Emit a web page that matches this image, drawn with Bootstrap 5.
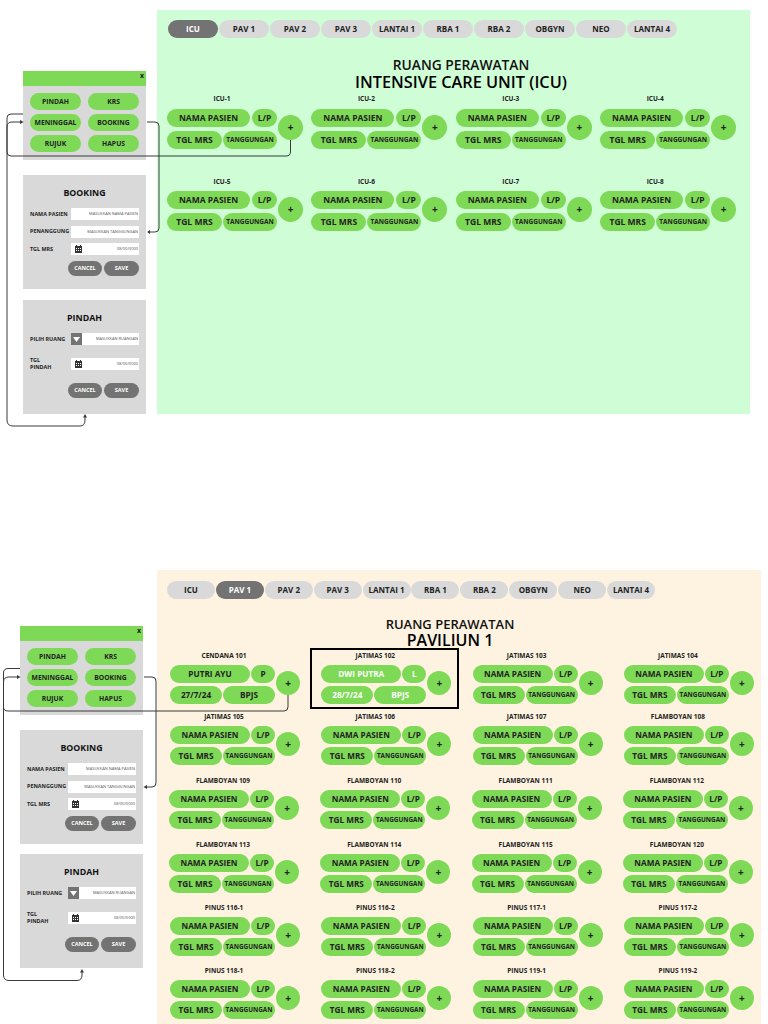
<!DOCTYPE html>
<html lang="id">
<head>
<meta charset="utf-8">
<title>Ruang Perawatan</title>
<link href="https://cdn.jsdelivr.net/npm/bootstrap@5.3.0/dist/css/bootstrap.min.css" rel="stylesheet">
<style>
html,body{margin:0;background:#fff}
body{position:relative;width:768px;height:1024px;overflow:hidden;font-family:"Open Sans","Liberation Sans",sans-serif;color:#1a1a1a}
.screen{position:absolute;left:157px}
.screen-a{top:10px;width:593px;height:404px;background:#cffdd6;padding:10px 0 0 10px}
.screen-b{top:570px;width:604px;height:454px;background:#fef3e0;padding:11px 0 0 13px}
.tabbar{display:flex;height:18px}
.screen-a .tabbar{gap:1px;margin-left:1px}
.screen-b .tabbar{gap:.9px;margin-left:-3px}
.tabpill{flex:0 0 auto;background:#d9d9d9;color:#222;font-weight:700;font-size:8px;line-height:17px;text-align:center;border-radius:9px}
.screen-a .tabpill{width:50px}
.screen-b .tabpill{width:48px}
.tabpill.on{background:#737373;color:#fff}
.head-a{margin:19px 0 0 10px;width:568px;text-align:center}
.head-b{margin:17px 0 0 -13px;width:586px;text-align:center}
.head-sub{font-size:13px;line-height:16px;font-weight:600;color:#111}
.head-a .head-sub{font-size:13.8px}
.head-main{font-size:16px;line-height:17px;font-weight:600;color:#000}
.head-a .head-main{font-size:16.300px;line-height:18px}
.grid-a{display:grid;grid-template-columns:repeat(4,144.4px);grid-auto-rows:82.500px;margin-top:2px}
.grid-b{display:grid;grid-template-columns:repeat(4,151.3px);grid-template-rows:61px 64px 64px 63px 63px 63px;margin-top:1px}
.bed{display:flex;align-items:flex-start;gap:1px}
.shift-l{margin-left:-1px}
.bed-body{width:110px;flex:0 0 auto}
.bed-name{font-size:6.500px;line-height:12px;font-weight:700;text-align:center;color:#222;margin-bottom:3.500px}
.bed-row{display:flex;gap:2px;margin-bottom:4px}
.gp{background:#7ed957;color:#222;font-weight:700;text-align:center;height:18px;line-height:17px;border-radius:9px;font-size:8.500px}
.w-name{width:83px}.w-sex{width:25px}.w-date{width:55px;margin-right:-1px}.w-pay{width:54px;font-size:6.500px}
.bed-plus{flex:0 0 25px;width:25px;height:25px;border-radius:50%;background:#7ed957;color:#222;font-weight:700;font-size:10px;line-height:25px;text-align:center;margin-top:21.500px}
.screen-b .bed-body{width:105px}
.screen-b .bed-name{margin:0 -3px 3px 0}
.screen-b .bed-row{gap:1px;margin-bottom:3px}
.screen-b .gp{font-size:8.200px}
.screen-b .w-name{width:80px}
.screen-b .w-sex{width:24px}
.screen-b .w-date{width:52px;margin-right:0}
.screen-b .w-pay{width:52px;font-size:6.400px}
.screen-b .w-pay.big{font-size:8.200px}
.screen-b .bed-plus{width:24px;height:24px;flex-basis:24px;line-height:24px;margin-top:20.500px}
.bed.filled-light .gp{color:#fff}
.bed-flag{position:relative}
.bed-flag::after{content:"";position:absolute;left:-11px;top:-2px;width:149px;height:61px;border:2px solid #000;pointer-events:none}
.win{position:absolute;width:123px;background:#d9d9d9}
.win-menu{height:89px}
.win-bar{height:15px;background:#7ed957;font-size:7px;font-weight:700;line-height:10px;text-align:right;padding-right:2px}
.win-btns{display:grid;grid-template-columns:51px 51px;column-gap:7px;row-gap:4px;padding:7px 0 0 7px}
.win .gb{height:17px;line-height:17px;font-size:6.800px;border-radius:8.500px}
.win-form{height:114px;padding:12px 7px 0}
.win-title{font-size:8.800px;line-height:12px;font-weight:700;text-align:center;color:#111;margin-bottom:9px}
.form-line{display:flex;align-items:center;height:12px;margin-bottom:5.500px}
.form-pair .form-line{margin-bottom:13px}
.form-lab{width:41px;flex:0 0 41px;font-size:5.400px;line-height:7px;font-weight:700;color:#222}
.form-field{flex:1;height:12px;background:#fff;display:flex;align-items:center;justify-content:space-between;font-size:4px;color:#555;padding-right:1px}
.form-field span:last-child{margin-left:auto}
.drop{width:11px;height:12px;background:#737373;display:flex;align-items:center;justify-content:center}
.cal{display:block;margin-left:4px}
.form-acts{display:flex;justify-content:flex-end;gap:2px}
.gray-pill{background:#737373;color:#fff;font-weight:700;font-size:5.500px;text-align:center;height:15px;line-height:14px;border-radius:7.500px}
.w-cancel{width:34px}.w-save{width:35px}
.wires{position:absolute;left:0;top:0;z-index:5;pointer-events:none}
</style>
</head>
<body>

<main class="screen screen-a">
  <nav class="tabbar">
    <div class="tabpill on">ICU</div><div class="tabpill">PAV 1</div><div class="tabpill">PAV 2</div><div class="tabpill">PAV 3</div><div class="tabpill">LANTAI 1</div><div class="tabpill">RBA 1</div><div class="tabpill">RBA 2</div><div class="tabpill">OBGYN</div><div class="tabpill">NEO</div><div class="tabpill">LANTAI 4</div>
  </nav>
  <div class="head-a"><div class="head-sub">RUANG PERAWATAN</div><div class="head-main">INTENSIVE CARE UNIT (ICU)</div></div>
  <div class="grid-a">
    <div class="bed"><div class="bed-body"><div class="bed-name">ICU-1</div><div class="bed-row"><div class="gp w-name">NAMA PASIEN</div><div class="gp w-sex">L/P</div></div><div class="bed-row"><div class="gp w-date">TGL MRS</div><div class="gp w-pay">TANGGUNGAN</div></div></div><div class="bed-plus">+</div></div>
    <div class="bed"><div class="bed-body"><div class="bed-name">ICU-2</div><div class="bed-row"><div class="gp w-name">NAMA PASIEN</div><div class="gp w-sex">L/P</div></div><div class="bed-row"><div class="gp w-date">TGL MRS</div><div class="gp w-pay">TANGGUNGAN</div></div></div><div class="bed-plus">+</div></div>
    <div class="bed"><div class="bed-body"><div class="bed-name">ICU-3</div><div class="bed-row"><div class="gp w-name">NAMA PASIEN</div><div class="gp w-sex">L/P</div></div><div class="bed-row"><div class="gp w-date">TGL MRS</div><div class="gp w-pay">TANGGUNGAN</div></div></div><div class="bed-plus">+</div></div>
    <div class="bed"><div class="bed-body"><div class="bed-name">ICU-4</div><div class="bed-row"><div class="gp w-name">NAMA PASIEN</div><div class="gp w-sex">L/P</div></div><div class="bed-row"><div class="gp w-date">TGL MRS</div><div class="gp w-pay">TANGGUNGAN</div></div></div><div class="bed-plus">+</div></div>
    <div class="bed"><div class="bed-body"><div class="bed-name">ICU-5</div><div class="bed-row"><div class="gp w-name">NAMA PASIEN</div><div class="gp w-sex">L/P</div></div><div class="bed-row"><div class="gp w-date">TGL MRS</div><div class="gp w-pay">TANGGUNGAN</div></div></div><div class="bed-plus">+</div></div>
    <div class="bed"><div class="bed-body"><div class="bed-name">ICU-6</div><div class="bed-row"><div class="gp w-name">NAMA PASIEN</div><div class="gp w-sex">L/P</div></div><div class="bed-row"><div class="gp w-date">TGL MRS</div><div class="gp w-pay">TANGGUNGAN</div></div></div><div class="bed-plus">+</div></div>
    <div class="bed"><div class="bed-body"><div class="bed-name">ICU-7</div><div class="bed-row"><div class="gp w-name">NAMA PASIEN</div><div class="gp w-sex">L/P</div></div><div class="bed-row"><div class="gp w-date">TGL MRS</div><div class="gp w-pay">TANGGUNGAN</div></div></div><div class="bed-plus">+</div></div>
    <div class="bed"><div class="bed-body"><div class="bed-name">ICU-8</div><div class="bed-row"><div class="gp w-name">NAMA PASIEN</div><div class="gp w-sex">L/P</div></div><div class="bed-row"><div class="gp w-date">TGL MRS</div><div class="gp w-pay">TANGGUNGAN</div></div></div><div class="bed-plus">+</div></div>
  </div>
</main>

<main class="screen screen-b">
  <nav class="tabbar">
    <div class="tabpill">ICU</div><div class="tabpill on">PAV 1</div><div class="tabpill">PAV 2</div><div class="tabpill">PAV 3</div><div class="tabpill">LANTAI 1</div><div class="tabpill">RBA 1</div><div class="tabpill">RBA 2</div><div class="tabpill">OBGYN</div><div class="tabpill">NEO</div><div class="tabpill">LANTAI 4</div>
  </nav>
  <div class="head-b"><div class="head-sub">RUANG PERAWATAN</div><div class="head-main">PAVILIUN 1</div></div>
  <div class="grid-b">
    <div class="bed"><div class="bed-body"><div class="bed-name">CENDANA 101</div><div class="bed-row"><div class="gp w-name">PUTRI AYU</div><div class="gp w-sex">P</div></div><div class="bed-row"><div class="gp w-date">27/7/24</div><div class="gp w-pay big">BPJS</div></div></div><div class="bed-plus">+</div></div>
    <div class="bed bed-flag filled-light"><div class="bed-body"><div class="bed-name text-dark">JATIMAS 102</div><div class="bed-row"><div class="gp w-name">DWI PUTRA</div><div class="gp w-sex">L</div></div><div class="bed-row"><div class="gp w-date">28/7/24</div><div class="gp w-pay big">BPJS</div></div></div><div class="bed-plus text-dark">+</div></div>
    <div class="bed"><div class="bed-body"><div class="bed-name">JATIMAS 103</div><div class="bed-row"><div class="gp w-name">NAMA PASIEN</div><div class="gp w-sex">L/P</div></div><div class="bed-row"><div class="gp w-date">TGL MRS</div><div class="gp w-pay">TANGGUNGAN</div></div></div><div class="bed-plus">+</div></div>
    <div class="bed"><div class="bed-body"><div class="bed-name">JATIMAS 104</div><div class="bed-row"><div class="gp w-name">NAMA PASIEN</div><div class="gp w-sex">L/P</div></div><div class="bed-row"><div class="gp w-date">TGL MRS</div><div class="gp w-pay">TANGGUNGAN</div></div></div><div class="bed-plus">+</div></div>

    <div class="bed"><div class="bed-body"><div class="bed-name">JATIMAS 105</div><div class="bed-row"><div class="gp w-name">NAMA PASIEN</div><div class="gp w-sex">L/P</div></div><div class="bed-row"><div class="gp w-date">TGL MRS</div><div class="gp w-pay">TANGGUNGAN</div></div></div><div class="bed-plus">+</div></div>
    <div class="bed"><div class="bed-body"><div class="bed-name">JATIMAS 106</div><div class="bed-row"><div class="gp w-name">NAMA PASIEN</div><div class="gp w-sex">L/P</div></div><div class="bed-row"><div class="gp w-date">TGL MRS</div><div class="gp w-pay">TANGGUNGAN</div></div></div><div class="bed-plus">+</div></div>
    <div class="bed"><div class="bed-body"><div class="bed-name">JATIMAS 107</div><div class="bed-row"><div class="gp w-name">NAMA PASIEN</div><div class="gp w-sex">L/P</div></div><div class="bed-row"><div class="gp w-date">TGL MRS</div><div class="gp w-pay">TANGGUNGAN</div></div></div><div class="bed-plus">+</div></div>
    <div class="bed"><div class="bed-body"><div class="bed-name">FLAMBOYAN 108</div><div class="bed-row"><div class="gp w-name">NAMA PASIEN</div><div class="gp w-sex">L/P</div></div><div class="bed-row"><div class="gp w-date">TGL MRS</div><div class="gp w-pay">TANGGUNGAN</div></div></div><div class="bed-plus">+</div></div>

    <div class="bed shift-l"><div class="bed-body"><div class="bed-name">FLAMBOYAN 109</div><div class="bed-row"><div class="gp w-name">NAMA PASIEN</div><div class="gp w-sex">L/P</div></div><div class="bed-row"><div class="gp w-date">TGL MRS</div><div class="gp w-pay">TANGGUNGAN</div></div></div><div class="bed-plus">+</div></div>
    <div class="bed shift-l"><div class="bed-body"><div class="bed-name">FLAMBOYAN 110</div><div class="bed-row"><div class="gp w-name">NAMA PASIEN</div><div class="gp w-sex">L/P</div></div><div class="bed-row"><div class="gp w-date">TGL MRS</div><div class="gp w-pay">TANGGUNGAN</div></div></div><div class="bed-plus">+</div></div>
    <div class="bed shift-l"><div class="bed-body"><div class="bed-name">FLAMBOYAN 111</div><div class="bed-row"><div class="gp w-name">NAMA PASIEN</div><div class="gp w-sex">L/P</div></div><div class="bed-row"><div class="gp w-date">TGL MRS</div><div class="gp w-pay">TANGGUNGAN</div></div></div><div class="bed-plus">+</div></div>
    <div class="bed shift-l"><div class="bed-body"><div class="bed-name">FLAMBOYAN 112</div><div class="bed-row"><div class="gp w-name">NAMA PASIEN</div><div class="gp w-sex">L/P</div></div><div class="bed-row"><div class="gp w-date">TGL MRS</div><div class="gp w-pay">TANGGUNGAN</div></div></div><div class="bed-plus">+</div></div>

    <div class="bed shift-l"><div class="bed-body"><div class="bed-name">FLAMBOYAN 113</div><div class="bed-row"><div class="gp w-name">NAMA PASIEN</div><div class="gp w-sex">L/P</div></div><div class="bed-row"><div class="gp w-date">TGL MRS</div><div class="gp w-pay">TANGGUNGAN</div></div></div><div class="bed-plus">+</div></div>
    <div class="bed shift-l"><div class="bed-body"><div class="bed-name">FLAMBOYAN 114</div><div class="bed-row"><div class="gp w-name">NAMA PASIEN</div><div class="gp w-sex">L/P</div></div><div class="bed-row"><div class="gp w-date">TGL MRS</div><div class="gp w-pay">TANGGUNGAN</div></div></div><div class="bed-plus">+</div></div>
    <div class="bed shift-l"><div class="bed-body"><div class="bed-name">FLAMBOYAN 115</div><div class="bed-row"><div class="gp w-name">NAMA PASIEN</div><div class="gp w-sex">L/P</div></div><div class="bed-row"><div class="gp w-date">TGL MRS</div><div class="gp w-pay">TANGGUNGAN</div></div></div><div class="bed-plus">+</div></div>
    <div class="bed shift-l"><div class="bed-body"><div class="bed-name">FLAMBOYAN 120</div><div class="bed-row"><div class="gp w-name">NAMA PASIEN</div><div class="gp w-sex">L/P</div></div><div class="bed-row"><div class="gp w-date">TGL MRS</div><div class="gp w-pay">TANGGUNGAN</div></div></div><div class="bed-plus">+</div></div>

    <div class="bed"><div class="bed-body"><div class="bed-name">PINUS 116-1</div><div class="bed-row"><div class="gp w-name">NAMA PASIEN</div><div class="gp w-sex">L/P</div></div><div class="bed-row"><div class="gp w-date">TGL MRS</div><div class="gp w-pay">TANGGUNGAN</div></div></div><div class="bed-plus">+</div></div>
    <div class="bed"><div class="bed-body"><div class="bed-name">PINUS 116-2</div><div class="bed-row"><div class="gp w-name">NAMA PASIEN</div><div class="gp w-sex">L/P</div></div><div class="bed-row"><div class="gp w-date">TGL MRS</div><div class="gp w-pay">TANGGUNGAN</div></div></div><div class="bed-plus">+</div></div>
    <div class="bed"><div class="bed-body"><div class="bed-name">PINUS 117-1</div><div class="bed-row"><div class="gp w-name">NAMA PASIEN</div><div class="gp w-sex">L/P</div></div><div class="bed-row"><div class="gp w-date">TGL MRS</div><div class="gp w-pay">TANGGUNGAN</div></div></div><div class="bed-plus">+</div></div>
    <div class="bed"><div class="bed-body"><div class="bed-name">PINUS 117-2</div><div class="bed-row"><div class="gp w-name">NAMA PASIEN</div><div class="gp w-sex">L/P</div></div><div class="bed-row"><div class="gp w-date">TGL MRS</div><div class="gp w-pay">TANGGUNGAN</div></div></div><div class="bed-plus">+</div></div>

    <div class="bed"><div class="bed-body"><div class="bed-name">PINUS 118-1</div><div class="bed-row"><div class="gp w-name">NAMA PASIEN</div><div class="gp w-sex">L/P</div></div><div class="bed-row"><div class="gp w-date">TGL MRS</div><div class="gp w-pay">TANGGUNGAN</div></div></div><div class="bed-plus">+</div></div>
    <div class="bed"><div class="bed-body"><div class="bed-name">PINUS 118-2</div><div class="bed-row"><div class="gp w-name">NAMA PASIEN</div><div class="gp w-sex">L/P</div></div><div class="bed-row"><div class="gp w-date">TGL MRS</div><div class="gp w-pay">TANGGUNGAN</div></div></div><div class="bed-plus">+</div></div>
    <div class="bed"><div class="bed-body"><div class="bed-name">PINUS 119-1</div><div class="bed-row"><div class="gp w-name">NAMA PASIEN</div><div class="gp w-sex">L/P</div></div><div class="bed-row"><div class="gp w-date">TGL MRS</div><div class="gp w-pay">TANGGUNGAN</div></div></div><div class="bed-plus">+</div></div>
    <div class="bed"><div class="bed-body"><div class="bed-name">PINUS 119-2</div><div class="bed-row"><div class="gp w-name">NAMA PASIEN</div><div class="gp w-sex">L/P</div></div><div class="bed-row"><div class="gp w-date">TGL MRS</div><div class="gp w-pay">TANGGUNGAN</div></div></div><div class="bed-plus">+</div></div>
  </div>
</main>

<!-- top windows -->
<section class="win win-menu" style="left:23px;top:71px">
  <div class="win-bar">x</div>
  <div class="win-btns"><div class="gp gb">PINDAH</div><div class="gp gb">KRS</div><div class="gp gb">MENINGGAL</div><div class="gp gb">BOOKING</div><div class="gp gb">RUJUK</div><div class="gp gb">HAPUS</div></div>
</section>
<section class="win win-form" style="left:23px;top:175px">
  <div class="win-title">BOOKING</div>
  <div class="form-line"><div class="form-lab">NAMA PASIEN</div><div class="form-field"><span>MASUKKAN NAMA PASIEN</span></div></div>
  <div class="form-line"><div class="form-lab">PENANGGUNG</div><div class="form-field"><span>MASUKKAN TANGGUNGAN</span></div></div>
  <div class="form-line"><div class="form-lab">TGL MRS</div><div class="form-field"><svg class="cal" width="7" height="8" viewBox="0 0 7 8"><path fill="#333" d="M0 1h7v7H0z"/><path fill="#fff" d="M1 3h1v1H1zM3 3h1v1H3zM5 3h1v1H5zM1 5h1v1H1zM3 5h1v1H3zM5 5h1v1H5z"/><path fill="#333" d="M1 0h1v1H1zM5 0h1v1H5z"/></svg><span>08/00/0000</span></div></div>
  <div class="form-acts"><div class="gray-pill w-cancel">CANCEL</div><div class="gray-pill w-save">SAVE</div></div>
</section>
<section class="win win-form form-pair" style="left:23px;top:300px">
  <div class="win-title">PINDAH</div>
  <div class="form-line"><div class="form-lab">PILIH RUANG</div><div class="form-field"><div class="drop"><svg width="7" height="5" viewBox="0 0 7 5"><path fill="#fff" d="M0 0h7L3.500 5z"/></svg></div><span>MASUKKAN RUANGAN</span></div></div>
  <div class="form-line"><div class="form-lab">TGL<br>PINDAH</div><div class="form-field"><svg class="cal" width="7" height="8" viewBox="0 0 7 8"><path fill="#333" d="M0 1h7v7H0z"/><path fill="#fff" d="M1 3h1v1H1zM3 3h1v1H3zM5 3h1v1H5zM1 5h1v1H1zM3 5h1v1H3zM5 5h1v1H5z"/><path fill="#333" d="M1 0h1v1H1zM5 0h1v1H5z"/></svg><span>08/00/0000</span></div></div>
  <div class="form-acts"><div class="gray-pill w-cancel">CANCEL</div><div class="gray-pill w-save">SAVE</div></div>
</section>

<!-- bottom windows -->
<section class="win win-menu" style="left:20px;top:626px">
  <div class="win-bar">x</div>
  <div class="win-btns"><div class="gp gb">PINDAH</div><div class="gp gb">KRS</div><div class="gp gb">MENINGGAL</div><div class="gp gb">BOOKING</div><div class="gp gb">RUJUK</div><div class="gp gb">HAPUS</div></div>
</section>
<section class="win win-form" style="left:20px;top:730px">
  <div class="win-title">BOOKING</div>
  <div class="form-line"><div class="form-lab">NAMA PASIEN</div><div class="form-field"><span>MASUKKAN NAMA PASIEN</span></div></div>
  <div class="form-line"><div class="form-lab">PENANGGUNG</div><div class="form-field"><span>MASUKKAN TANGGUNGAN</span></div></div>
  <div class="form-line"><div class="form-lab">TGL MRS</div><div class="form-field"><svg class="cal" width="7" height="8" viewBox="0 0 7 8"><path fill="#333" d="M0 1h7v7H0z"/><path fill="#fff" d="M1 3h1v1H1zM3 3h1v1H3zM5 3h1v1H5zM1 5h1v1H1zM3 5h1v1H3zM5 5h1v1H5z"/><path fill="#333" d="M1 0h1v1H1zM5 0h1v1H5z"/></svg><span>08/00/0000</span></div></div>
  <div class="form-acts"><div class="gray-pill w-cancel">CANCEL</div><div class="gray-pill w-save">SAVE</div></div>
</section>
<section class="win win-form form-pair" style="left:20px;top:854px">
  <div class="win-title">PINDAH</div>
  <div class="form-line"><div class="form-lab">PILIH RUANG</div><div class="form-field"><div class="drop"><svg width="7" height="5" viewBox="0 0 7 5"><path fill="#fff" d="M0 0h7L3.500 5z"/></svg></div><span>MASUKKAN RUANGAN</span></div></div>
  <div class="form-line"><div class="form-lab">TGL<br>PINDAH</div><div class="form-field"><svg class="cal" width="7" height="8" viewBox="0 0 7 8"><path fill="#333" d="M0 1h7v7H0z"/><path fill="#fff" d="M1 3h1v1H1zM3 3h1v1H3zM5 3h1v1H5zM1 5h1v1H1zM3 5h1v1H3zM5 5h1v1H5z"/><path fill="#333" d="M1 0h1v1H1zM5 0h1v1H5z"/></svg><span>08/00/0000</span></div></div>
  <div class="form-acts"><div class="gray-pill w-cancel">CANCEL</div><div class="gray-pill w-save">SAVE</div></div>
</section>

<svg class="wires" width="768" height="1024" viewBox="0 0 768 1024" fill="none" stroke="#3a3a3a" stroke-width="1">
  <path d="M23 114H11Q7 114 7 118V152Q7 156 11 156H286Q290.500 156 290.500 152V140"/>
  <path d="M7 420V127Q7 122 12 122H21M7 420Q7 426 13 426H80Q85 426 85 420V416"/>
  <path d="M147 122H155Q159 122 159 126V228Q159 232 155 232H149"/>
  <path d="M20 668.500H8Q3.500 668.500 3.500 673V707Q3.500 711 8 711H284Q288 711 288 707V695"/>
  <path d="M3.500 975V682Q3.500 677 9 677H18M3.500 975Q3.500 980.500 9 980.500H77Q82 980.500 82 975V971"/>
  <path d="M144 677H152Q156 677 156 681V783Q156 787 152 787H146"/>
  <g fill="#3a3a3a" stroke="none">
    <path d="M23.500 122L20 120V124zM85 414L83 417.500H87zM147 232L150 230V234zM20.500 677L17 675V679zM82 969L80 972.500H84zM143.500 787L147 785V789z"/>
  </g>
</svg>

<script src="https://cdn.jsdelivr.net/npm/bootstrap@5.3.0/dist/js/bootstrap.bundle.min.js"></script>
</body>
</html>
